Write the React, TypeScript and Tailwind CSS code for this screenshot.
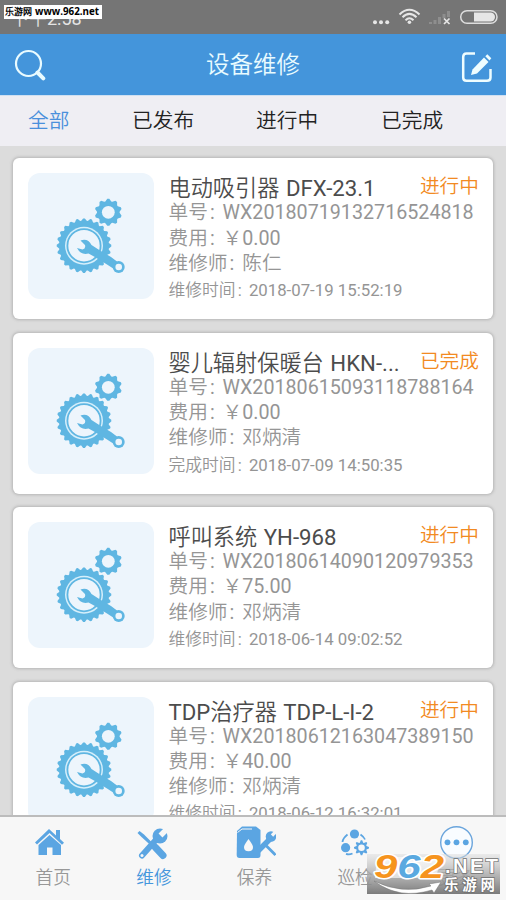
import type { ReactNode } from "react";

const orders = [
  {
    name: "电动吸引器 DFX-23.1",
    status: "进行中",
    no: "WX20180719132716524818",
    cost: "0.00",
    worker: "陈仁",
    timeLabel: "维修时间",
    time: "2018-07-19 15:52:19",
  },
  {
    name: "婴儿辐射保暖台 HKN-...",
    status: "已完成",
    no: "WX20180615093118788164",
    cost: "0.00",
    worker: "邓炳清",
    timeLabel: "完成时间",
    time: "2018-07-09 14:50:35",
  },
  {
    name: "呼叫系统 YH-968",
    status: "进行中",
    no: "WX20180614090120979353",
    cost: "75.00",
    worker: "邓炳清",
    timeLabel: "维修时间",
    time: "2018-06-14 09:02:52",
  },
  {
    name: "TDP治疗器 TDP-L-I-2",
    status: "进行中",
    no: "WX20180612163047389150",
    cost: "40.00",
    worker: "邓炳清",
    timeLabel: "维修时间",
    time: "2018-06-12 16:32:01",
  },
];

type Order = (typeof orders)[number];

const gearPoints = (cx: number, cy: number, outer: number, inner: number, teeth: number) => {
  const points: string[] = [];
  for (let i = 0; i < teeth; i++) {
    const steps = [
      [-0.42, inner],
      [-0.12, outer],
      [0.12, outer],
      [0.42, inner],
    ];
    steps.forEach(([offset, r]) => {
      const a = ((i + offset) / teeth) * Math.PI * 2 - Math.PI / 2;
      points.push(`${(cx + r * Math.cos(a)).toFixed(2)},${(cy + r * Math.sin(a)).toFixed(2)}`);
    });
  }
  return points.join(" ");
};

const RepairPicture = () => (
  <svg viewBox="0 0 126 126" className="w-full h-full" fill="#5fb6e2">
    <polygon points={gearPoints(56, 72.7, 27.3, 25, 24)} />
    <circle cx="56" cy="72.7" r="19" fill="#d6effb" />
    <circle cx="56" cy="72.7" r="16.6" fill="#edf5fc" stroke="#5fb6e2" strokeWidth="1.8" />
    <polygon points={gearPoints(80.3, 39.3, 13.6, 11.3, 10)} />
    <circle cx="80.3" cy="39.3" r="6.4" fill="#edf5fc" />
    <path d="M52.5 67.5Q60 65 63.500 72L72 77.5L83 84L89 88.5L86 96L79 91.500L66 83.500L60.500 80.500Q53 82.500 49 75L54.500 76.500Q58 75.500 57 72Z" />
    <circle cx="90.700" cy="94" r="6" />
    <circle cx="90.700" cy="94" r="3.300" fill="#edf5fc" />
  </svg>
);

const StatusBar = () => (
  <div className="relative h-[34px] shrink-0 bg-[#757575] flex items-start justify-between pl-[11px] pr-2">
    <span className="text-[18px] leading-[37px] text-[#e4e4e4]">下午2:58</span>
    <svg viewBox="0 0 130 34" className="w-[130px] h-[34px]" fill="#e6e6e6">
      <circle cx="7" cy="22.3" r="2" />
      <circle cx="13" cy="22.3" r="2" />
      <circle cx="19.2" cy="22.3" r="2" />
      <g fill="none" stroke="#e6e6e6" strokeWidth="2">
        <path d="M31.5 14.5Q41.3 5 51.5 14.5" />
        <path d="M34.5 17.3Q41.3 10.5 48.5 17.3" />
        <path d="M37.5 20.3Q41.3 16 45.5 20.3" />
      </g>
      <circle cx="41.4" cy="22.3" r="1.8" />
      <path d="M61 22h3v2h-3zM65.5 20h3v4h-3zM70 17h3v7h-3zM74.5 14h3v4h-3zM79 11h3v6h-3z" fill="#8e8e8e" />
      <path d="M76 18.5L81.5 24M81.5 18.5L76 24" stroke="#e6e6e6" strokeWidth="1.7" />
      <rect x="92.7" y="10.7" width="36.3" height="12.6" rx="6.3" fill="none" stroke="#dedede" strokeWidth="1.5" />
      <path d="M106 12.5H122.5a4.5 4.5 0 0 1 0 9H106Z" />
    </svg>
    <div className="absolute left-1 top-[5px] w-[98px] h-[14px] bg-white text-black text-[9px] leading-[14px] font-bold whitespace-nowrap flex items-center gap-[3px] pl-px">
      <span>乐游网</span>
      <span className="font-['Open_Sans',sans-serif] text-[9.8px] leading-[14px]">www.962.net</span>
    </div>
  </div>
);

const Header = () => (
  <header className="h-[62px] shrink-0 bg-[#4495db] border-b border-[#cfe0f2] flex items-center justify-between px-[14px]">
    <svg viewBox="0 0 32 32" className="w-8 h-8" fill="none" stroke="#e9fbff" strokeLinecap="round">
      <circle cx="14.5" cy="14.5" r="12.5" strokeWidth="2.2" />
      <path d="M23.5 23.5L29.3 29.3" strokeWidth="4" />
    </svg>
    <h1 className="text-[23.5px] leading-8 text-[#e9fbff]">设备维修</h1>
    <svg viewBox="0 0 32 32" className="w-8 h-8 mt-1" fill="none" stroke="#eefdff" strokeWidth="2.5">
      <path d="M15 2.5H6.5Q3.2 2.5 3.2 6V26.5Q3.2 29.8 6.5 29.8H27Q30.5 29.8 30.5 26.5V18" />
      <path d="M11 24L12.5 18.5L24 6.5L28.5 11L17 22.5Z" fill="#eefdff" stroke="none" />
      <path d="M25.3 5.2L27.3 3.2L31.3 7.2L29.5 9.5Z" fill="#eefdff" stroke="none" />
    </svg>
  </header>
);

const FilterTabs = () => (
  <div className="h-[50px] shrink-0 bg-[#efeef3] flex items-center text-[20.7px] leading-6 text-[#222] pl-7 pb-px">
    <span className="w-[104px] text-[#4a90dc]">全部</span>
    <span className="w-[124px]">已发布</span>
    <span className="w-[125px]">进行中</span>
    <span>已完成</span>
  </div>
);

const Field = ({ label, children }: { label: string; children: ReactNode }) => (
  <p>
    {label}
    <span className="ml-[2px] mr-[3px]">:</span> {children}
  </p>
);

const OrderCard = ({ order }: { order: Order }) => (
  <div className="h-[161px] shrink-0 bg-white rounded-md shadow-[0_0_3px_1px_#b5b5b5] flex pl-[15px] pt-[15px]">
    <div className="w-[126px] h-[126px] shrink-0 rounded-xl bg-[#edf5fc]">
      <RepairPicture />
    </div>
    <div className="flex-1 pl-[14.5px] pr-[14px] pt-[2px] text-[19.7px] leading-[25.3px] text-[#959595] whitespace-nowrap">
      <div className="flex justify-between h-[25px]">
        <h2 className="text-[22.2px] leading-[26px] [word-spacing:1px] text-[#4c4c4c]">{order.name}</h2>
        <span className="leading-[24px] text-[#f28a22]">{order.status}</span>
      </div>
      <Field label="单号">{order.no}</Field>
      <Field label="费用">￥{order.cost}</Field>
      <Field label="维修师">{order.worker}</Field>
      <div className="text-[16.8px] leading-[29px]">
        <Field label={order.timeLabel}>{order.time}</Field>
      </div>
    </div>
  </div>
);

const NavItem = ({ label, active, children }: { label: string; active?: boolean; children: ReactNode }) => (
  <div className="flex-1 flex flex-col items-center pt-[9px]">
    <svg viewBox="0 0 44 36" className="w-11 h-9" fill="#5ba5e2">
      {children}
    </svg>
    <span className={active ? "text-[17.7px] leading-8 text-[#4596dc]" : "text-[17.7px] leading-8 text-[#989898]"}>
      {label}
    </span>
  </div>
);

const BottomNav = () => (
  <nav className="relative h-[85px] shrink-0 bg-[#f7f7f7] border-t-2 border-[#bcbcbc] flex pl-[3px]">
    <NavItem label="首页">
      <path d="M4 16.5L18 3L25 9.5V4H29V13L33 16.8L31 18.8L18.5 7L6 18.5Z" />
      <path d="M7.5 19L18.5 9L30 19V29H21.5V21.5H16V29H7.5Z" />
    </NavItem>
    <NavItem label="维修" active>
      <path d="M26.5 11L10 29.5" fill="none" stroke="#5ba5e2" strokeWidth="6" strokeLinecap="round" />
      <circle cx="28" cy="10" r="7.5" />
      <path d="M28.5 9.5L38 0" fill="none" stroke="#f7f7f7" strokeWidth="5.5" />
      <circle cx="10" cy="29.5" r="1.5" fill="#f7f7f7" />
      <path d="M5.5 7L7.5 5L12 8.5L22 18.5L20 20.5L9.5 11Z" />
      <path d="M23.5 21.5L31 29.5" fill="none" stroke="#5ba5e2" strokeWidth="7" strokeLinecap="round" />
    </NavItem>
    <NavItem label="保养">
      <path d="M5 5L10 0.5H24L28.5 4V29Q28.5 32 26 32H7.5Q4.7 32 4.7 29Z" />
      <path d="M5.5 6.5L10 3H20" fill="none" stroke="#f7f7f7" strokeWidth="1" />
      <path d="M16.5 13Q12 19 12 21Q12 25.3 16.5 25.3T21 21Q21 19 16.5 13Z" fill="#f7f7f7" />
      <path d="M39 12L26 25" fill="none" stroke="#5ba5e2" strokeWidth="5.5" />
      <circle cx="39" cy="10.5" r="5.3" />
      <path d="M40 9.5L46 3.5" fill="none" stroke="#f7f7f7" strokeWidth="3.3" />
      <path d="M33 18.5L43.5 29" fill="none" stroke="#5ba5e2" strokeWidth="2.8" />
    </NavItem>
    <NavItem label="巡检">
      <circle cx="21.5" cy="8" r="4.6" />
      <circle cx="12.6" cy="21.7" r="4.6" />
      <path d="M14.5 8.5Q10 12 9.5 16M27.5 8.5Q31 11 32 13.5M13 27.8Q16 29 19.5 27.5" fill="none" stroke="#5ba5e2" strokeWidth="1.8" />
      <polygon points={gearPoints(28.5, 21.7, 7.5, 5.3, 8)} />
      <circle cx="28.5" cy="21.7" r="3.3" fill="#f7f7f7" />
    </NavItem>
    <NavItem label="更多">
      <circle cx="22.5" cy="16.5" r="15.8" fill="#f9fcff" stroke="#6ba5dc" strokeWidth="1.4" />
      <circle cx="13.5" cy="16.3" r="2.9" />
      <circle cx="22.5" cy="16.3" r="2.9" />
      <circle cx="31.8" cy="16.3" r="2.9" />
    </NavItem>
    <SiteMark />
  </nav>
);

const SiteMark = () => (
  <svg viewBox="0 0 133 46" className="absolute left-[367px] top-[34px] w-[133px] h-[46px]">
    <defs>
      <linearGradient id="mark-bg" x1="0" y1="0" x2="0" y2="1">
        <stop offset="0" stopColor="#dddddd" stopOpacity="0.5" />
        <stop offset="0.5" stopColor="#a8a8a8" stopOpacity="0.8" />
        <stop offset="1" stopColor="#757575" stopOpacity="0.95" />
      </linearGradient>
    </defs>
    <rect y="3" width="133" height="40" fill="url(#mark-bg)" />
    <path d="M7 30Q35 44 64 35L62 33L74 31L67 42L65 39Q32 49 7 30Z" fill="white" stroke="#777" strokeWidth="0.5" />
    {/* white outline first, then the digits thickened with their own colour */}
    <g
      fontFamily="Liberation Sans, sans-serif"
      fontWeight="bold"
      fontStyle="italic"
      fontSize="33"
      strokeLinejoin="round"
    >
      <path d="M10 6H74L69 27H8Z" fill="white" opacity="0.6" />
      <text x="7" y="27" textLength="70" lengthAdjust="spacingAndGlyphs" strokeWidth="3" paintOrder="stroke" stroke="white">
        <tspan fill="#f6941e">9</tspan>
        <tspan fill="#5aa9e0">6</tspan>
        <tspan fill="#f6941e">2</tspan>
      </text>
    </g>
    <g fill="white" stroke="#707070" strokeWidth="1.5" paintOrder="stroke" fontWeight="bold">
      <text x="78" y="21.5" fontSize="20" fontFamily="Liberation Sans, sans-serif" textLength="53">.NET</text>
      <text x="77" y="39" fontSize="14.5" fontFamily="Noto Sans CJK SC, sans-serif" textLength="51">乐游网</text>
    </g>
  </svg>
);

export default function App() {
  return (
    <div className="w-[506px] h-[900px] overflow-hidden flex flex-col bg-[#dcdcdc] font-[Roboto,'Noto_Sans_CJK_SC_DemiLight','Noto_Sans_CJK_SC_Light','Noto_Sans_CJK_SC',sans-serif]">
      <StatusBar />
      <Header />
      <FilterTabs />
      <main className="flex-1 min-h-0 overflow-hidden flex flex-col gap-[13.4px] px-[13px] pt-[12.4px]">
        {orders.map((order) => (
          <OrderCard key={order.no} order={order} />
        ))}
      </main>
      <BottomNav />
    </div>
  );
}
